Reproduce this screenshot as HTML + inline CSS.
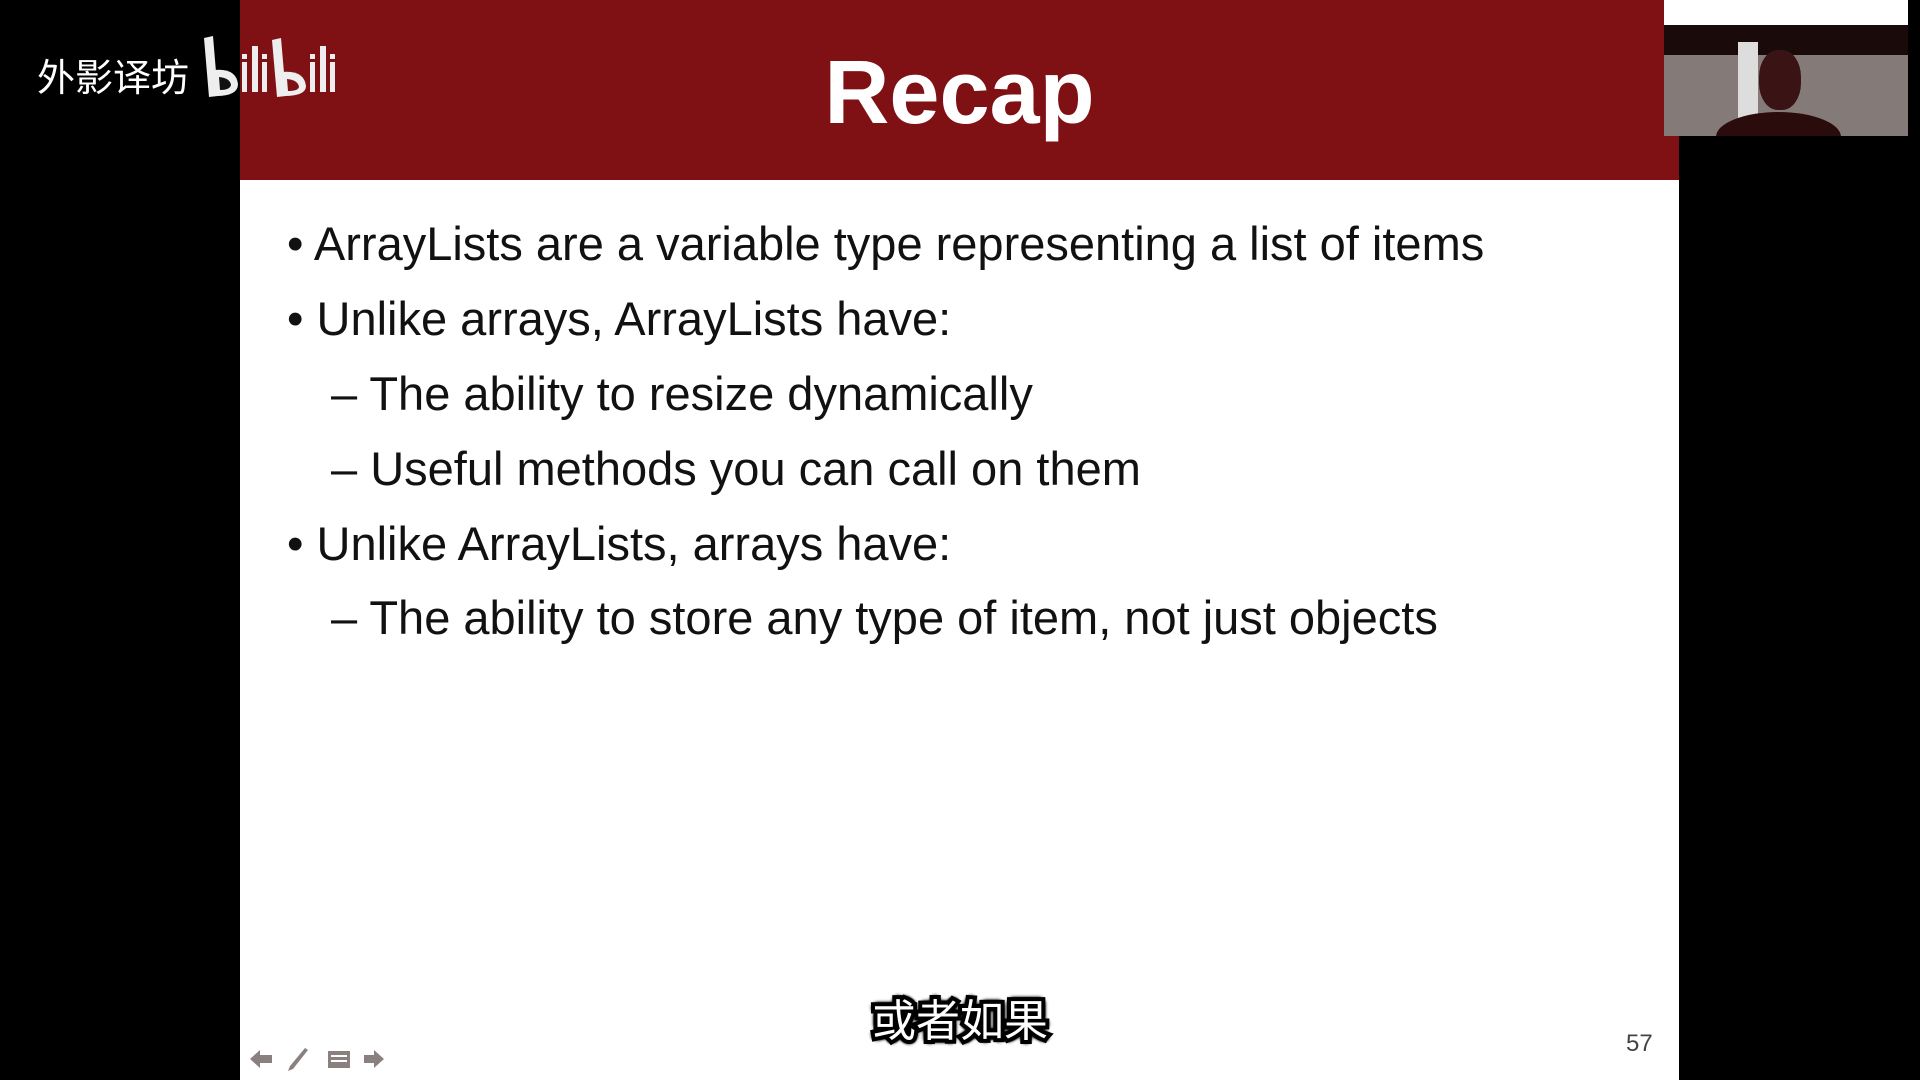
<!DOCTYPE html>
<html><head><meta charset="utf-8"><style>
*{margin:0;padding:0;box-sizing:border-box}
body{width:1920px;height:1080px;background:#000;position:relative;overflow:hidden;font-family:"Liberation Sans","Noto Sans CJK SC",sans-serif}
.slide{position:absolute;left:240px;top:0;width:1439px;height:1080px;background:#fff}
.hdr{position:absolute;left:0;top:0;width:100%;height:180px;background:#7f1115}
.title{position:absolute;left:0;width:100%;top:38px;text-align:center;color:#fff;font-weight:bold;font-size:90px;line-height:110px}
.line{position:absolute;font-size:47px;color:#111;white-space:nowrap;line-height:54px}
.b{left:47px}
.s{left:91px}
.num{position:absolute;left:1386px;top:1030px;font-size:24px;color:#444}
.sub{position:absolute;left:0;width:1920px;text-align:center;top:987px;font-size:44px;line-height:60px;color:#fff;font-family:"Noto Sans CJK SC",sans-serif;-webkit-text-stroke:8px #000;paint-order:stroke fill;text-shadow:0 0 3px #000,3px 3px 2px #000,-3px -3px 2px #000,3px -3px 2px #000,-3px 3px 2px #000,0 4px 3px #000,0 -4px 3px #000,4px 0 3px #000,-4px 0 3px #000}
.logo{position:absolute;left:37px;top:50px;color:#fff;font-size:38px;line-height:50px;font-family:"Noto Sans CJK SC",sans-serif}
.cam{position:absolute;left:1664px;top:0;width:244px;height:136px;background:#847a77;overflow:hidden}
</style></head><body>
<div class="slide">
<div class="hdr"><div class="title">Recap</div></div>
<div class="line b" style="top:217px">• ArrayLists are a variable type representing a list of items</div>
<div class="line b" style="top:292px">• Unlike arrays, ArrayLists have:</div>
<div class="line s" style="top:367px">– The ability to resize dynamically</div>
<div class="line s" style="top:442px">– Useful methods you can call on them</div>
<div class="line b" style="top:517px">• Unlike ArrayLists, arrays have:</div>
<div class="line s" style="top:591px">– The ability to store any type of item, not just objects</div>
<div class="num">57</div>
<svg style="position:absolute;left:8px;top:1045px" width="150" height="30" viewBox="0 0 150 30">
<g fill="#8a8080"><path d="M2 14 L12 5 L12 10 L24 10 L24 18 L12 18 L12 23Z"/>
<path d="M40 26 L45 24 L60 5 L57 3 L42 21Z"/>
<rect x="80" y="6" width="22" height="17"/><path d="M116 10 L126 10 L126 5 L136 14 L126 23 L126 18 L116 18Z"/></g>
<g fill="#fff"><rect x="83" y="10" width="16" height="2"/><rect x="83" y="15" width="16" height="2"/></g>
</svg>
</div>
<div class="cam">
<div style="position:absolute;left:0;top:0;width:244px;height:25px;background:#fff"></div>
<div style="position:absolute;left:0;top:25px;width:244px;height:30px;background:#1a0a0a"></div>
<div style="position:absolute;left:74px;top:42px;width:20px;height:78px;background:#ddd"></div>
<div style="position:absolute;left:95px;top:50px;width:42px;height:60px;border-radius:45%;background:#3a1414"></div>
<div style="position:absolute;left:52px;top:112px;width:125px;height:50px;border-radius:50% 50% 0 0;background:#2a0c0c"></div>
</div>
<div class="logo">外影译坊</div>
<svg style="position:absolute;left:200px;top:34px" width="150" height="70" viewBox="0 0 150 70" fill="#eee">
<path d="M4 4 L13 2 L18 62 L9 63 Z"/><path d="M14 36 Q36 34 38 50 Q38 62 16 62 Z"/><path d="M19 43 Q30 44 31 51 Q30 56 20 56 Z" fill="#111"/>
<rect x="42" y="28" width="5" height="30"/><rect x="42" y="20" width="5" height="5"/>
<rect x="52" y="12" width="6" height="46"/>
<rect x="62" y="28" width="5" height="30"/><rect x="62" y="20" width="5" height="5"/>
<path d="M72 6 L81 4 L86 62 L77 63 Z"/><path d="M82 38 Q104 36 106 52 Q106 62 84 62 Z"/><path d="M87 45 Q98 46 99 53 Q98 57 88 57 Z" fill="#7f1115"/>
<rect x="110" y="28" width="5" height="30"/><rect x="110" y="20" width="5" height="5"/>
<rect x="120" y="12" width="6" height="46"/>
<rect x="130" y="28" width="5" height="30"/><rect x="130" y="20" width="5" height="5"/>
</svg>
<div class="sub">或者如果</div>
</body></html>
